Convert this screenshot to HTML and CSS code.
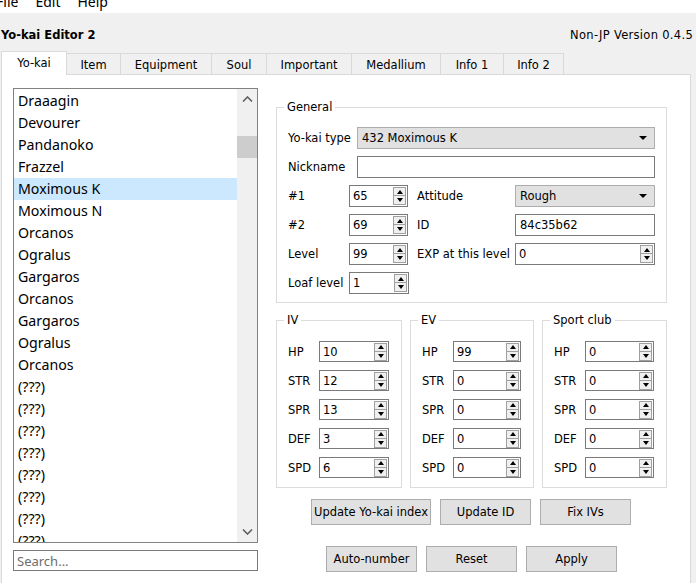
FILE: index.html
```html
<!DOCTYPE html>
<html>
<head>
<meta charset="utf-8">
<title>Yo-kai Editor 2</title>
<link rel="stylesheet" href="styles.css">
</head>
<body>
<div class="menubar">
  <div class="menus"><span>File</span><span>Edit</span><span>Help</span></div>
</div>
<div class="header">
  <span class="app-title">Yo-kai Editor 2</span>
  <span class="version">Non-JP Version 0.4.5</span>
</div>
<div class="tabs">
  <div class="tab active t1">Yo-kai</div>
  <div class="tab t2">Item</div>
  <div class="tab t3">Equipment</div>
  <div class="tab t4">Soul</div>
  <div class="tab t5">Important</div>
  <div class="tab t6">Medallium</div>
  <div class="tab t7">Info 1</div>
  <div class="tab t8">Info 2</div>
</div>
<div class="pane">
  <div class="left">
    <div class="listbox">
      <ul class="list">
        <li>Draaagin</li>
        <li>Devourer</li>
        <li>Pandanoko</li>
        <li>Frazzel</li>
        <li class="selected">Moximous K</li>
        <li>Moximous N</li>
        <li>Orcanos</li>
        <li>Ogralus</li>
        <li>Gargaros</li>
        <li>Orcanos</li>
        <li>Gargaros</li>
        <li>Ogralus</li>
        <li>Orcanos</li>
        <li>(???)</li>
        <li>(???)</li>
        <li>(???)</li>
        <li>(???)</li>
        <li>(???)</li>
        <li>(???)</li>
        <li>(???)</li>
        <li>(???)</li>
      </ul>
      <div class="vscroll">
        <div class="sbtn"><svg width="11" height="6" viewBox="0 0 11 6"><path d="M1 5.5 L5.5 1 L10 5.5" fill="none" stroke="#606060" stroke-width="1.6"/></svg></div>
        <div class="track"><div class="thumb"></div></div>
        <div class="sbtn"><svg width="11" height="6" viewBox="0 0 11 6"><path d="M1 0.5 L5.5 5 L10 0.5" fill="none" stroke="#606060" stroke-width="1.6"/></svg></div>
      </div>
    </div>
    <div class="search">Search...</div>
  </div>

  <div class="right">
    <fieldset class="group general">
      <legend>General</legend>
      <div class="grow wide">
        <span class="lbl">Yo-kai type</span>
        <div class="combo"><span>432 Moximous K</span><i class="caret"></i></div>
      </div>
      <div class="grow wide">
        <span class="lbl">Nickname</span>
        <div class="textbox"></div>
      </div>
      <div class="grow pair">
        <span class="lbl">#1</span>
        <div class="spin"><span class="val">65</span><div class="sbtns"><b class="up"></b><b class="dn"></b></div></div>
        <span class="lbl">Attitude</span>
        <div class="combo"><span>Rough</span><i class="caret"></i></div>
      </div>
      <div class="grow pair">
        <span class="lbl">#2</span>
        <div class="spin"><span class="val">69</span><div class="sbtns"><b class="up"></b><b class="dn"></b></div></div>
        <span class="lbl">ID</span>
        <div class="textbox"><span class="val">84c35b62</span></div>
      </div>
      <div class="grow pair">
        <span class="lbl">Level</span>
        <div class="spin"><span class="val">99</span><div class="sbtns"><b class="up"></b><b class="dn"></b></div></div>
        <span class="lbl">EXP at this level</span>
        <div class="spin"><span class="val">0</span><div class="sbtns"><b class="up"></b><b class="dn"></b></div></div>
      </div>
      <div class="grow loaf">
        <span class="lbl">Loaf level</span>
        <div class="spin"><span class="val">1</span><div class="sbtns"><b class="up"></b><b class="dn"></b></div></div>
      </div>
    </fieldset>

    <div class="stats">
      <fieldset class="group stat">
        <legend>IV</legend>
        <div class="srow"><span class="lbl">HP</span><div class="spin"><span class="val">10</span><div class="sbtns"><b class="up"></b><b class="dn"></b></div></div></div>
        <div class="srow"><span class="lbl">STR</span><div class="spin"><span class="val">12</span><div class="sbtns"><b class="up"></b><b class="dn"></b></div></div></div>
        <div class="srow"><span class="lbl">SPR</span><div class="spin"><span class="val">13</span><div class="sbtns"><b class="up"></b><b class="dn"></b></div></div></div>
        <div class="srow"><span class="lbl">DEF</span><div class="spin"><span class="val">3</span><div class="sbtns"><b class="up"></b><b class="dn"></b></div></div></div>
        <div class="srow"><span class="lbl">SPD</span><div class="spin"><span class="val">6</span><div class="sbtns"><b class="up"></b><b class="dn"></b></div></div></div>
      </fieldset>
      <fieldset class="group stat">
        <legend>EV</legend>
        <div class="srow"><span class="lbl">HP</span><div class="spin"><span class="val">99</span><div class="sbtns"><b class="up"></b><b class="dn"></b></div></div></div>
        <div class="srow"><span class="lbl">STR</span><div class="spin"><span class="val">0</span><div class="sbtns"><b class="up"></b><b class="dn"></b></div></div></div>
        <div class="srow"><span class="lbl">SPR</span><div class="spin"><span class="val">0</span><div class="sbtns"><b class="up"></b><b class="dn"></b></div></div></div>
        <div class="srow"><span class="lbl">DEF</span><div class="spin"><span class="val">0</span><div class="sbtns"><b class="up"></b><b class="dn"></b></div></div></div>
        <div class="srow"><span class="lbl">SPD</span><div class="spin"><span class="val">0</span><div class="sbtns"><b class="up"></b><b class="dn"></b></div></div></div>
      </fieldset>
      <fieldset class="group stat">
        <legend>Sport club</legend>
        <div class="srow"><span class="lbl">HP</span><div class="spin"><span class="val">0</span><div class="sbtns"><b class="up"></b><b class="dn"></b></div></div></div>
        <div class="srow"><span class="lbl">STR</span><div class="spin"><span class="val">0</span><div class="sbtns"><b class="up"></b><b class="dn"></b></div></div></div>
        <div class="srow"><span class="lbl">SPR</span><div class="spin"><span class="val">0</span><div class="sbtns"><b class="up"></b><b class="dn"></b></div></div></div>
        <div class="srow"><span class="lbl">DEF</span><div class="spin"><span class="val">0</span><div class="sbtns"><b class="up"></b><b class="dn"></b></div></div></div>
        <div class="srow"><span class="lbl">SPD</span><div class="spin"><span class="val">0</span><div class="sbtns"><b class="up"></b><b class="dn"></b></div></div></div>
      </fieldset>
    </div>

    <div class="btnrow row1">
      <div class="btn wide">Update Yo-kai index</div>
      <div class="btn">Update ID</div>
      <div class="btn">Fix IVs</div>
    </div>
    <div class="btnrow row2">
      <div class="btn">Auto-number</div>
      <div class="btn">Reset</div>
      <div class="btn">Apply</div>
    </div>
  </div>
</div>
</body>
</html>
```

FILE: styles.css
```css
* { box-sizing: border-box; }
html, body { margin: 0; padding: 0; }
body {
  width: 696px;
  height: 583px;
  overflow: hidden;
  background: #f0f0f0;
  font-family: "DejaVu Sans", sans-serif;
  font-size: 11.5px;
  color: #000;
}

/* menu bar (scrolled, only the lower part visible) */
.menubar {
  height: 13px;
  background: #fff;
  overflow: hidden;
  font-family: "Noto Sans", sans-serif;
  font-size: 14px;
  line-height: 14px;
}
.menus {
  display: flex;
  gap: 17px;
  margin-top: -5px;
  margin-left: -4px;
}

/* title line */
.header {
  height: 38px;
  display: flex;
  justify-content: space-between;
  align-items: flex-start;
  padding: 15px 3px 0 1px;
  line-height: 14px;
}
.app-title { font-weight: bold; }
.version { letter-spacing: 0.3px; }

/* tabs */
.tabs {
  height: 23px;
  display: flex;
  align-items: flex-end;
  padding-left: 1px;
}
.tab {
  height: 21px;
  border: 1px solid #d9d9d9;
  border-bottom: none;
  background: #f0f0f0;
  margin-left: -1px;
  display: flex;
  align-items: center;
  justify-content: center;
  line-height: 14px;
  padding-top: 1px;
}
.tab.active {
  height: 24px;
  background: #fff;
  margin-left: 0;
  margin-bottom: -1px;
  padding-top: 0;
  padding-bottom: 2px;
  position: relative;
  z-index: 1;
}
.t1 { width: 66px; }
.t2 { width: 55px; }
.t3 { width: 92px; }
.t4 { width: 56px; }
.t5 { width: 86px; }
.t6 { width: 90px; }
.t7 { width: 64px; }
.t8 { width: 61px; }

/* main pane */
.pane {
  margin-left: 1px;
  width: 690px;
  height: 530px;
  background: #fff;
  border: 1px solid #d9d9d9;
  padding: 13px 0 0 11px;
  display: flex;
  gap: 18px;
  align-items: flex-start;
}

/* left column */
.left {
  width: 245px;
  display: flex;
  flex-direction: column;
  gap: 7px;
}
.listbox {
  height: 455px;
  border: 1px solid #828282;
  display: flex;
  overflow: hidden;
}
.list {
  flex: 1;
  list-style: none;
  margin: 0;
  padding: 1px 0 0 0;
  font-family: "Noto Sans", sans-serif;
  font-size: 14.2px;
  overflow: hidden;
}
.list li {
  height: 22px;
  line-height: 22px;
  padding-left: 4px;
  white-space: nowrap;
}
.list li.selected { background: #cce8ff; }
.vscroll {
  width: 20px;
  background: #f0f0f0;
  display: flex;
  flex-direction: column;
}
.sbtn {
  height: 20px;
  display: flex;
  align-items: center;
  justify-content: center;
}
.track { flex: 1; }
.thumb {
  margin-top: 27px;
  height: 22px;
  background: #cdcdcd;
}
.search {
  height: 21px;
  border: 1px solid #7a7a7a;
  font-family: "Noto Sans", sans-serif;
  font-size: 13px;
  line-height: 20px;
  color: #6d6d6d;
  padding-left: 3px;
}

/* right column */
.right {
  width: 391px;
  margin-top: 12px;
}
.group {
  margin: 0;
  border: 1px solid #dcdcdc;
  min-width: 0;
}
.group legend {
  padding: 0 3px;
  margin-left: -4px;
  line-height: 14px;
}
.general {
  padding: 13px 11px 8px 11px;
  display: flex;
  flex-direction: column;
  gap: 7px;
}
.grow {
  height: 22px;
  display: grid;
  align-items: center;
}
.grow.wide { grid-template-columns: 69px 1fr; }
.grow.pair { grid-template-columns: 61px 59px 107px 1fr; }
.grow.pair > .lbl:nth-of-type(2) { padding-left: 9px; }
.grow.loaf { grid-template-columns: 61px 60px; }
.grow > * { height: 22px; }
.lbl {
  display: flex;
  align-items: center;
  white-space: nowrap;
}

.combo {
  background: #e1e1e1;
  border: 1px solid #adadad;
  display: flex;
  align-items: center;
  justify-content: space-between;
  padding: 0 4px 0 4px;
}
.caret {
  width: 0;
  height: 0;
  border-left: 4px solid transparent;
  border-right: 4px solid transparent;
  border-top: 4px solid #000;
  margin-right: 3px;
}
.textbox {
  background: #fff;
  border: 1px solid #7a7a7a;
  display: flex;
  align-items: center;
  padding-left: 4px;
}
.spin {
  background: #fff;
  border: 1px solid #7a7a7a;
  display: flex;
  align-items: center;
  justify-content: space-between;
  padding: 0 1px 0 3px;
}
.sbtns {
  width: 13px;
  display: flex;
  flex-direction: column;
}
.sbtns b {
  height: 9px;
  border: 1px solid #a0a0a0;
  background: #f0f0f0;
  display: flex;
  align-items: center;
  justify-content: center;
}
.sbtns b + b { border-top: none; }
.sbtns b::before {
  content: "";
  width: 0;
  height: 0;
  border-left: 3.5px solid transparent;
  border-right: 3.5px solid transparent;
}
.sbtns b.up::before { border-bottom: 4px solid #000; }
.sbtns b.dn::before { border-top: 4px solid #000; }

/* stat groups */
.stats {
  margin-top: 10px;
  display: grid;
  grid-template-columns: 126px 124px 125px;
  column-gap: 8px;
}
.stat {
  padding: 14px 12px 9px 11px;
  display: flex;
  flex-direction: column;
  gap: 8px;
}
.srow {
  height: 21px;
  display: grid;
  grid-template-columns: 31px 1fr;
}
.srow .spin { height: 21px; }

/* buttons */
.btnrow {
  display: flex;
  gap: 9px;
}
.row1 { margin-top: 11px; padding-left: 35px; }
.row2 { margin-top: 21px; padding-left: 50px; }
.btn {
  width: 91px;
  height: 26px;
  background: #e1e1e1;
  border: 1px solid #adadad;
  display: flex;
  align-items: center;
  justify-content: center;
  white-space: nowrap;
}
.btn.wide { width: 120px; }
```
